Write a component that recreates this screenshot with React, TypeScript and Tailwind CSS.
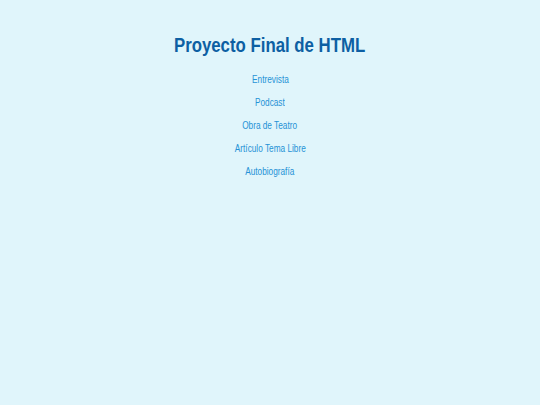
export default function App() {
  const links = ["Entrevista", "Podcast", "Obra de Teatro", "Artículo Tema Libre", "Autobiografía"];
  return (
    <div className="w-[540px] h-[405px] bg-[#e0f5fb] flex flex-col items-center" style={{ fontFamily: '"Liberation Sans", Arial, sans-serif' }}>
      <h1 className="mt-[33px] text-[21px] leading-[24px] font-bold text-[#0d5fa3]">
        <span className="inline-block scale-x-[0.8] origin-center">Proyecto Final de HTML</span>
      </h1>
      <ul className="mt-[11px] flex flex-col items-center">
        {links.map((l) => (
          <li key={l} className="h-[23px] flex items-center">
            <a className="inline-block text-[11px] leading-[13px] text-[#2592d6] scale-x-[0.75] origin-center">{l}</a>
          </li>
        ))}
      </ul>
    </div>
  );
}
